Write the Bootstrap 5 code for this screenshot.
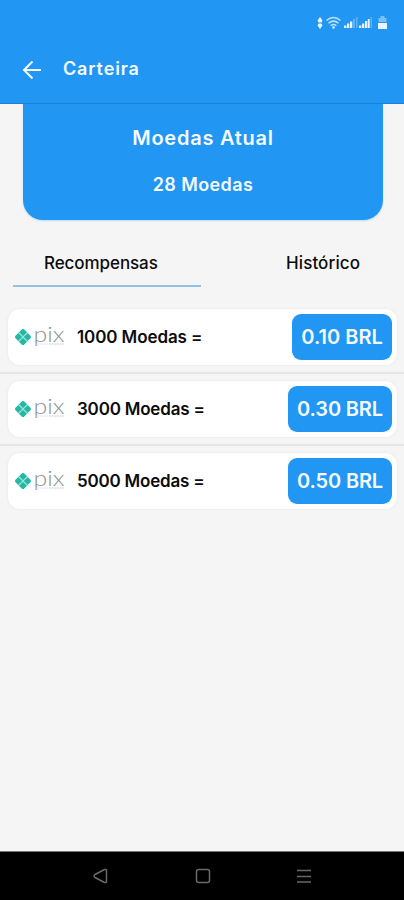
<!DOCTYPE html>
<html lang="pt-BR">
<head>
<meta charset="utf-8">
<meta name="viewport" content="width=device-width, initial-scale=1">
<title>Carteira</title>
<link href="https://cdn.jsdelivr.net/npm/bootstrap@5.3.0/dist/css/bootstrap.min.css" rel="stylesheet">
<style>
  body { font-family: Inter, "Open Sans", sans-serif; background: #f5f5f5; color: #0c0c0c; height: 900px; overflow: hidden; line-height: 1; }
  .blue { background: #2196f3; color: #f4faff; }
  .topbar { height: 104px; border-bottom: 1px solid #1b80d3; }
  .statusbar { height: 46px; padding: 15px 14px 0 0; }
  .titlebar { height: 45px; padding-left: 22px; }
  .title { font-size: 18px; font-weight: 600; margin-left: 21px; letter-spacing: .85px; }
  .balance { width: 360px; height: 116px; margin-left: 23px; border-radius: 0 0 20px 20px; box-shadow: 0 1px 2px #2196f340; font-weight: 600; }
  .balance-label { font-size: 20px; padding-top: 24px; letter-spacing: .75px; }
  .balance-value { font-size: 18px; margin-top: 28px; letter-spacing: .4px; }
  .tabs { height: 68px; padding: 0 13px; font-size: 17px; font-weight: 500; }
  .tab-item { width: 188px; height: 67px; padding-top: 35px; }
  .tab-on { border-bottom: 2px solid #8fc1ea; padding-left: 31px; letter-spacing: -.08px; }
  .tab-off { padding-left: 85px; letter-spacing: .1px; }
  .rewards { padding-top: 21px; }
  .reward { height: 56px; margin: 0 7px 0 8px; padding: 0 5px 0 6px; border-radius: 12px; background: #fff; box-shadow: 0 0 3px #00000012; }
  .rule { height: 2px; margin: 7px 0; background: #e6e6e6; }
  .coins { font-size: 17px; font-weight: 600; margin-left: 11px; letter-spacing: -.1px; }
  .coins-wide { letter-spacing: -.2px; }
  .pay { width: 104px; height: 46px; border-radius: 9px; font-size: 20px; font-weight: 600; padding: 0; letter-spacing: -.15px; }
  .pay-first { width: 100px; letter-spacing: 0; }
  .pix-word { font-family: Lato, sans-serif; font-weight: 300; }
  .navkeys { height: 49px; background: #000; border-top: 1px solid #777; padding: 0 92px; }
</style>
<script src="https://cdn.jsdelivr.net/npm/bootstrap@5.3.0/dist/js/bootstrap.bundle.min.js"></script>
</head>
<body class="d-flex flex-column">
<svg width="0" height="0" class="d-none">
  <symbol id="pix" viewBox="0 0 52 24">
    <g fill="#25b8a6"><rect x="-6.200" y="-6.200" width="12.400" height="12.400" rx="1.800" transform="translate(9 12) rotate(45)"/></g>
    <path d="M4.500 7.500 9 12l4.500-4.500M4.500 16.500 9 12l4.500 4.500" fill="none" stroke="#a5e5dc" stroke-width="1.100"/>
    <text class="pix-word" x="19.500" y="16.500" font-size="21" textLength="31" lengthAdjust="spacingAndGlyphs" fill="#8e9292">pix</text>
    <path d="M22 19h12" stroke="#e0e4e4" stroke-width=".8"/><path d="M35 19h15" stroke="#c9cfcf" stroke-width="1" stroke-dasharray="2 .7"/>
  </symbol>
</svg>
<header class="topbar blue flex-shrink-0">
  <div class="statusbar d-flex justify-content-end">
    <svg width="74" height="16" viewBox="0 0 74 16" fill="#eaf6ff">
      <path d="M4 2 6.500 5.500 5.500 7.500h-3L1.500 5.500zM4 14 6.500 10.500 5.500 8.500h-3L1.500 10.500z"/>
      <g fill="none" stroke="#bfe2ff" stroke-width="1.500"><path d="M10.500 5.500q7-6 14 0M12.500 8.300q5-4.300 10 0M14.700 10.800q2.800-2.500 5.600 0"/></g>
      <circle cx="17.500" cy="12.500" r="1.300"/>
      <path d="M28 10.500h2.500V13H28zM31 8.500h2.300V13H31zM34 6.500h2.300V13H34z"/><path d="M37 4h2v9h-2zM40 2h1.500v11H40z" opacity=".3"/>
      <path d="M43 10.500h2.300V13H43zM46 8.500h2.300V13H46zM49 6h2.200v7H49zM51.800 4h1.900v9h-1.900z"/><path d="M54.500 2H56v11h-1.500z" opacity=".3"/>
      <path d="M64.500 1h4v2h2v4h-8V3h2z" opacity=".45"/><path d="M62 8h9v6h-9z"/>
    </svg>
  </div>
  <div class="titlebar d-flex align-items-center">
    <svg width="20" height="20" viewBox="0 0 20 20" fill="none" stroke="#f4faff" stroke-width="2"><path d="M19 11H2.500M10.500 2.500 2 11l8.500 8.500"/></svg>
    <h1 class="title mb-0">Carteira</h1>
  </div>
</header>
<main class="flex-grow-1">
  <section class="balance blue text-center">
    <div class="balance-label">Moedas Atual</div>
    <div class="balance-value">28 Moedas</div>
  </section>
  <div class="tabs d-flex" role="tablist">
    <div class="tab-item tab-on" role="tab">Recompensas</div>
    <div class="tab-item tab-off" role="tab">Histórico</div>
  </div>
  <section class="rewards">
    <div class="reward d-flex align-items-center">
      <svg class="pix" width="52" height="24"><use href="#pix"/></svg>
      <span class="coins">1000 Moedas =</span>
      <button class="btn pay pay-first blue ms-auto">0.10 BRL</button>
    </div>
    <div class="rule"></div>
    <div class="reward d-flex align-items-center">
      <svg class="pix" width="52" height="24"><use href="#pix"/></svg>
      <span class="coins coins-wide">3000 Moedas =</span>
      <button class="btn pay blue ms-auto">0.30 BRL</button>
    </div>
    <div class="rule"></div>
    <div class="reward d-flex align-items-center">
      <svg class="pix" width="52" height="24"><use href="#pix"/></svg>
      <span class="coins coins-wide">5000 Moedas =</span>
      <button class="btn pay blue ms-auto">0.50 BRL</button>
    </div>
  </section>
</main>
<nav class="navkeys d-flex justify-content-between align-items-center flex-shrink-0">
  <svg width="17" height="18" viewBox="0 0 17 18" fill="none" stroke="#6a6a6a" stroke-width="1.500"><path d="M14.500 3.500v11q0 1.500-2 1L3 10.500q-2-1.500 0-3l9.500-5q2-.5 2 1z"/></svg>
  <svg width="16" height="16" viewBox="0 0 16 16" fill="none" stroke="#6a6a6a" stroke-width="1.500"><rect x="1.500" y="1.500" width="13" height="13" rx="2"/></svg>
  <svg width="16" height="16" viewBox="0 0 16 16" fill="none" stroke="#6a6a6a" stroke-width="1.700"><path d="M1 2.500h14M1 8.500h14M1 14h14"/></svg>
</nav>
</body>
</html>
